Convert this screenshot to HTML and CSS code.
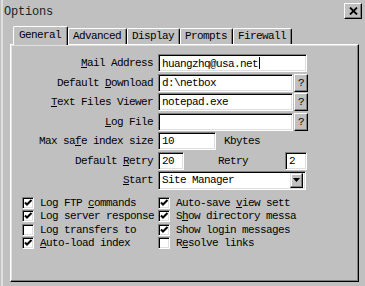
FILE: index.html
```html
<!DOCTYPE html>
<html lang="en">
  <head>
    <meta charset="UTF-8" />
    <meta name="viewport" content="width=device-width, initial-scale=1.0" />
    <title>Options</title>
    <link rel="stylesheet" href="styles.css">
  </head>
  <body>
    <div class="window">
      <!-- Title bar -->
      <div class="titlebar">
        <span class="title">Options</span>
        <span class="close">
          <svg width="9" height="8" viewBox="0 0 9 8">
            <path d="M1 0.5 L8 7.5 M8 0.5 L1 7.5" stroke="#000" stroke-width="1.8" />
          </svg>
        </span>
      </div>

      <!-- Tabs -->
      <div class="tabs">
        <div class="tab active">General</div>
        <div class="tab">Advanced</div>
        <div class="tab">Display</div>
        <div class="tab">Prompts</div>
        <div class="tab">Firewall</div>
      </div>

      <div class="panel">
        <div class="form">
          <div class="row">
            <label class="lbl"><u>M</u>ail Address</label>
            <div class="field w-mail">huangzhq@usa.net<span class="caret"></span></div>
          </div>
          <div class="row">
            <label class="lbl">Default <u>D</u>ownload</label>
            <div class="field w-path">d:\netbox</div>
            <span class="qbtn">?</span>
          </div>
          <div class="row">
            <label class="lbl"><u>T</u>ext Files Viewer</label>
            <div class="field w-path">notepad.exe</div>
            <span class="qbtn">?</span>
          </div>
          <div class="row">
            <label class="lbl"><u>L</u>og File</label>
            <div class="field w-path"></div>
            <span class="qbtn">?</span>
          </div>
          <div class="row">
            <label class="lbl">Max sa<u>f</u>e index size</label>
            <div class="field w-size">10</div>
            <span class="unit">Kbytes</span>
          </div>
          <div class="row">
            <label class="lbl">Default <u>R</u>etry</label>
            <div class="field w-retry">20</div>
            <span class="retry-lbl">Retry</span>
            <div class="field w-small">2</div>
          </div>
          <div class="row">
            <label class="lbl"><u>S</u>tart</label>
            <div class="field select">
              <span>Site Manager</span>
              <span class="drop">
                <svg width="7" height="4" viewBox="0 0 7 4"><path d="M0 0 H7 L3.5 4 Z" fill="#000" /></svg>
              </span>
            </div>
          </div>
        </div>

        <!-- Checkbox options -->
        <div class="checks">
          <div class="check">
            <span class="box"><svg class="tick" width="10" height="10" viewBox="0 0 10 10"><path d="M2 4.5 L4 6.5 L8.5 2" fill="none" stroke="#000" stroke-width="2" /></svg></span>
            <span>Log FTP <u>c</u>ommands</span>
          </div>
          <div class="check">
            <span class="box"><svg class="tick" width="10" height="10" viewBox="0 0 10 10"><path d="M2 4.5 L4 6.5 L8.5 2" fill="none" stroke="#000" stroke-width="2" /></svg></span>
            <span>Auto-save <u>v</u>iew sett</span>
          </div>
          <div class="check">
            <span class="box"><svg class="tick" width="10" height="10" viewBox="0 0 10 10"><path d="M2 4.5 L4 6.5 L8.5 2" fill="none" stroke="#000" stroke-width="2" /></svg></span>
            <span>Log server response</span>
          </div>
          <div class="check">
            <span class="box"><svg class="tick" width="10" height="10" viewBox="0 0 10 10"><path d="M2 4.5 L4 6.5 L8.5 2" fill="none" stroke="#000" stroke-width="2" /></svg></span>
            <span>S<u>h</u>ow directory messa</span>
          </div>
          <div class="check">
            <span class="box"></span>
            <span>Log transfers to</span>
          </div>
          <div class="check">
            <span class="box"><svg class="tick" width="10" height="10" viewBox="0 0 10 10"><path d="M2 4.5 L4 6.5 L8.5 2" fill="none" stroke="#000" stroke-width="2" /></svg></span>
            <span>Show login messages</span>
          </div>
          <div class="check">
            <span class="box"><svg class="tick" width="10" height="10" viewBox="0 0 10 10"><path d="M2 4.5 L4 6.5 L8.5 2" fill="none" stroke="#000" stroke-width="2" /></svg></span>
            <span><u>A</u>uto-load index</span>
          </div>
          <div class="check">
            <span class="box"></span>
            <span>R<u>e</u>solve links</span>
          </div>
        </div>
      </div>
    </div>
  </body>
</html>
```

FILE: styles.css
```css
body {
  margin: 0;
  padding: 0;
  background-color: #c0c0c0;
  font-family: "Liberation Mono", "Courier New", monospace;
  font-size: 11px;
  letter-spacing: -0.6px;
  color: #000;
}
u {
  text-underline-offset: 1px;
}
.window {
  width: 365px;
  height: 286px;
  box-sizing: border-box;
  border-left: 1px solid #c0c0c0;
  box-shadow: inset 3px 0 0 -1px #dfdfdf;
  overflow: hidden;
}

/* title bar */
.titlebar {
  height: 20px;
  display: flex;
  justify-content: space-between;
  align-items: flex-start;
  padding: 0 3px 0 3px;
}
.title {
  font-size: 12px;
  letter-spacing: -0.2px;
  margin-top: 5px;
  color: #222;
}
.close {
  width: 16px;
  height: 14px;
  margin-top: 3px;
  display: flex;
  align-items: center;
  justify-content: center;
  background-color: #c0c0c0;
  border: 1px solid;
  border-color: #fff #000 #000 #fff;
  box-shadow: inset -1px -1px #808080;
}

/* tabs */
.tabs {
  display: flex;
  align-items: flex-end;
  margin: 6px 0 0 12px;
  height: 18px;
}
.tab {
  height: 16px;
  line-height: 15px;
  padding: 0 5px 0 4px;
  box-sizing: border-box;
  border-top: 1px solid #fff;
  border-left: 1px solid #fff;
  border-right: 1px solid #000;
  border-radius: 2px 2px 0 0;
  box-shadow: inset -1px 0 #808080;
}
.tab.active {
  position: relative;
  z-index: 1;
  height: 19px;
  line-height: 16px;
  padding: 0 6px 0 5px;
  margin-bottom: -1px;
  background-color: #c0c0c0;
}

/* tab panel */
.panel {
  margin-left: 9px;
  width: 349px;
  height: 238px;
  box-sizing: border-box;
  border: 1px solid;
  border-color: #fff #000 #000 #fff;
  box-shadow: inset -1px -1px #808080, inset 1px 1px #dfdfdf;
  padding-top: 9px;
}
.form {
  display: flex;
  flex-direction: column;
  gap: 1.5px;
}
.row {
  display: flex;
  align-items: center;
  height: 18px;
}
.lbl {
  width: 142px;
  margin-right: 5px;
  text-align: right;
  white-space: nowrap;
}

/* sunken fields */
.field {
  height: 18px;
  box-sizing: border-box;
  background-color: #fff;
  border: 1px solid;
  border-color: #808080 #fff #fff #808080;
  box-shadow: inset 1px 1px #000, inset -1px -1px #dfdfdf;
  padding: 2px 0 0 3px;
  white-space: nowrap;
  overflow: hidden;
}
.w-mail {
  width: 149px;
}
.w-path {
  width: 135px;
}
.w-size {
  width: 58px;
}
.w-retry {
  width: 26px;
}
.w-small {
  width: 22px;
  margin-left: 37px;
}
.caret {
  display: inline-block;
  width: 1px;
  height: 12px;
  background-color: #000;
  vertical-align: -2px;
  margin-left: 1px;
}
.qbtn {
  width: 14px;
  height: 18px;
  box-sizing: border-box;
  margin-left: 1px;
  display: flex;
  align-items: center;
  justify-content: center;
  border: 1px solid;
  border-color: #fff #000 #000 #fff;
  box-shadow: inset -1px -1px #808080;
}
.unit {
  margin-left: 8px;
}
.retry-lbl {
  margin-left: 34px;
}
.select {
  width: 148px;
  height: 19px;
  display: flex;
  justify-content: space-between;
  padding: 0 2px 0 3px;
  align-items: center;
}
.drop {
  width: 13px;
  height: 15px;
  box-sizing: border-box;
  display: flex;
  align-items: center;
  justify-content: center;
  background-color: #c0c0c0;
  border: 1px solid;
  border-color: #dfdfdf #000 #000 #dfdfdf;
  box-shadow: inset -1px -1px #808080, inset 1px 1px #fff;
}

/* checkboxes */
.checks {
  display: grid;
  grid-template-columns: 136px 1fr;
  grid-auto-rows: 13.5px;
  margin: 7px 0 0 11px;
}
.check {
  display: flex;
  align-items: center;
  gap: 6px;
  white-space: nowrap;
}
.box {
  width: 12px;
  height: 12px;
  box-sizing: border-box;
  background-color: #fff;
  border: 1px solid;
  border-color: #808080 #fff #fff #808080;
  box-shadow: inset 1px 1px #000, inset -1px -1px #dfdfdf;
  flex-shrink: 0;
}
.tick {
  display: block;
}
```
